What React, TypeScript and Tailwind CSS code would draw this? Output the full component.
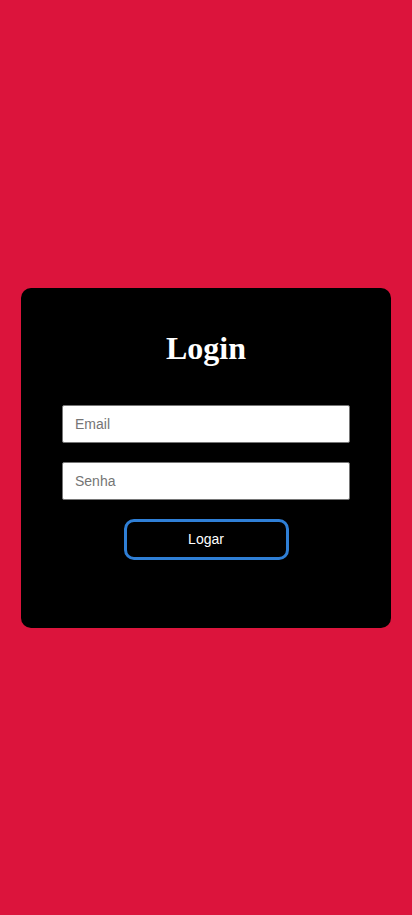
import React from 'react';

const App = () => {
  return (
    <div className="min-h-screen bg-[#dc143c] flex items-center justify-center font-['Liberation_Sans',Arial,sans-serif]">
      {/* Login card */}
      <div className="w-[370px] h-[340px] bg-black rounded-[10px] px-[41px] pt-[42px] flex flex-col items-center">
        <h1 className="text-white text-[32px] leading-[37px] font-bold font-['Liberation_Serif','Times_New_Roman',serif]">Login</h1>
        <input
          type="text"
          placeholder="Email"
          className="mt-[38px] w-full h-[38px] bg-white border border-[#767676] rounded-[2px] px-3 text-[14px] text-black placeholder:text-[#757575] outline-none"
        />
        <input
          type="password"
          placeholder="Senha"
          className="mt-[19px] w-full h-[38px] bg-white border border-[#767676] rounded-[2px] px-3 text-[14px] text-black placeholder:text-[#757575] outline-none"
        />
        <button className="mt-[19px] w-[165px] h-[41px] bg-black border-[3px] border-[#2f7fd6] rounded-[10px] text-white text-[14px] font-medium">
          Logar
        </button>
      </div>
    </div>
  );
};

export default App;
